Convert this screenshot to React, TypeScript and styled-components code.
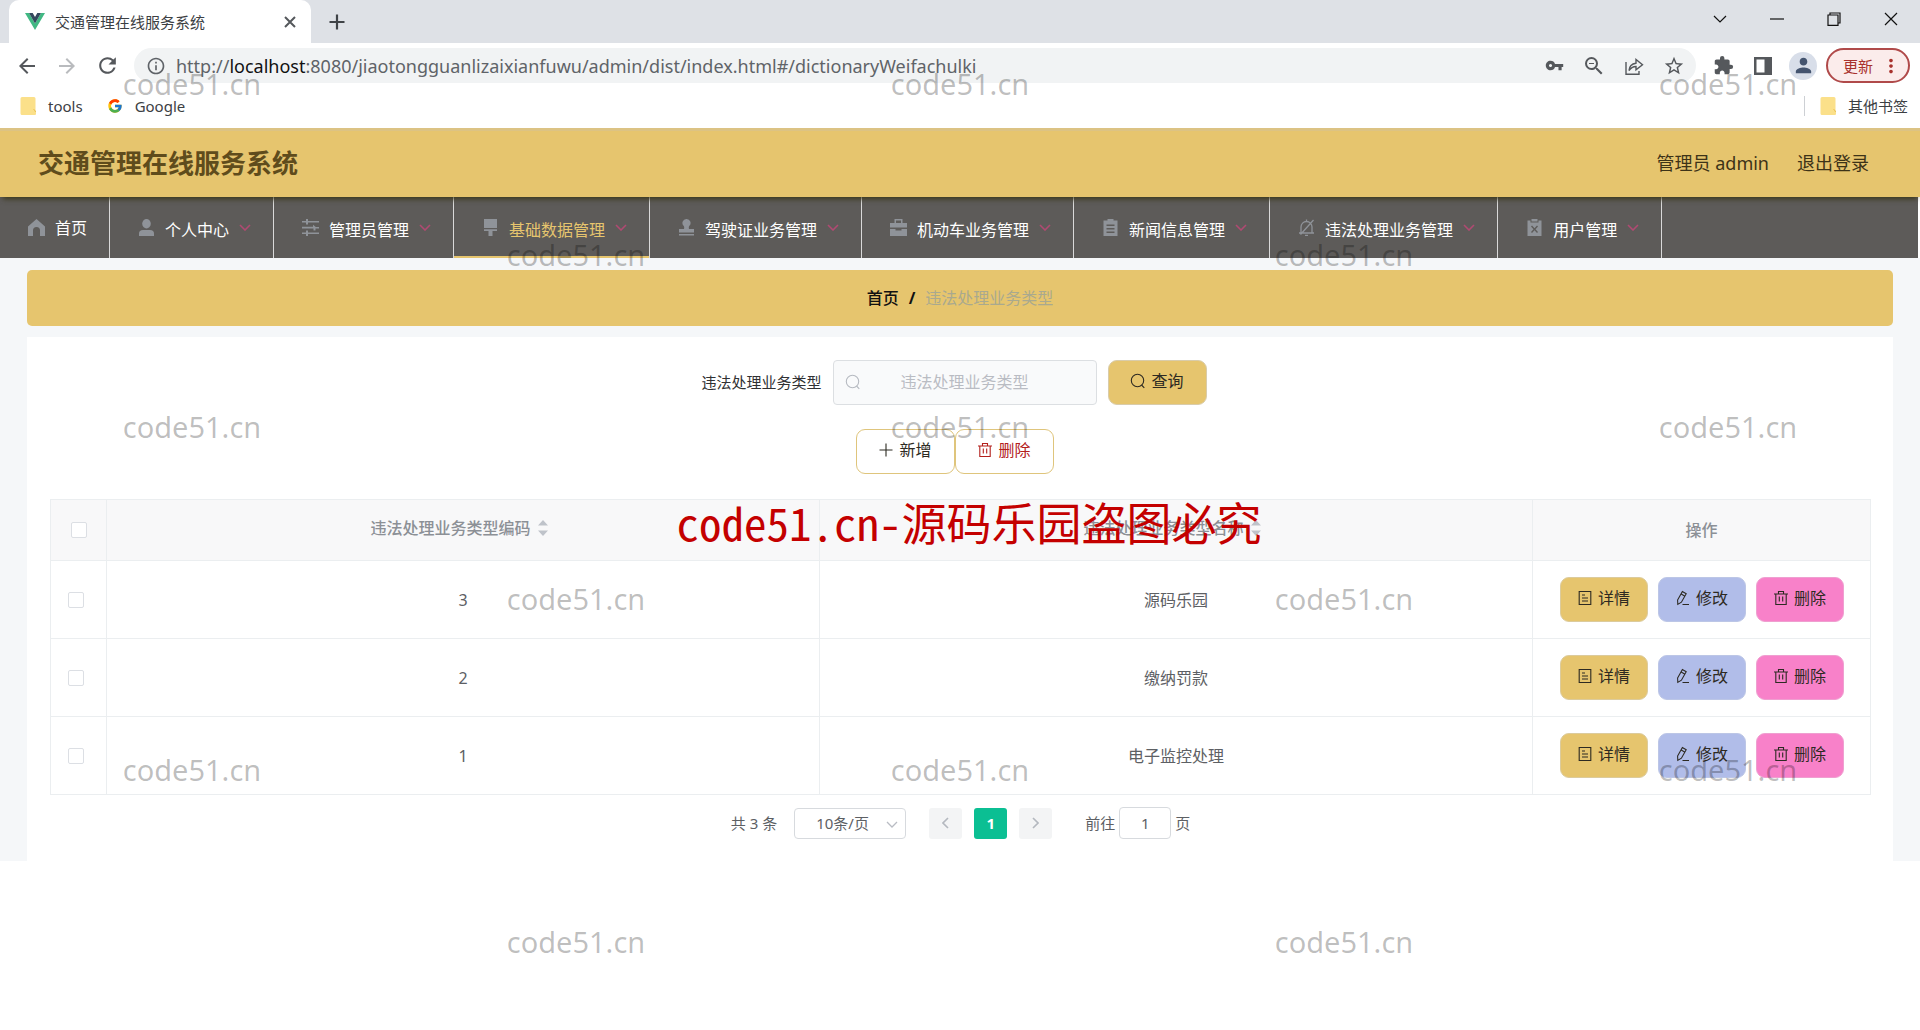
import React from "react";
import styled, { createGlobalStyle } from "styled-components";
import {
  MdVpnKey,
  MdZoomOut,
  MdStarBorder,
  MdExtension,
  MdPerson,
  MdRefresh,
  MdArrowBack,
  MdArrowForward,
  MdInfoOutline,
  MdMoreVert,
} from "react-icons/md";
import { FcGoogle } from "react-icons/fc";

const gold = "#e6c56e";
const line = "#ebeef0";

const GlobalStyle = createGlobalStyle`
  *, *::before, *::after { box-sizing: border-box; }
  body {
    margin: 0;
    background: #fff;
    color: #303133;
    font-family: "Noto Sans", "Noto Sans CJK SC", sans-serif;
    font-size: 16px;
    line-height: 24px;
  }
  button, input, select { font: inherit; color: inherit; margin: 0; }
  button { cursor: pointer; }
  a { color: inherit; text-decoration: none; }
  svg { display: block; flex: none; }
`;

const Screen = styled.div`
  position: relative;
  min-height: 100vh;
  overflow: hidden;
`;

/* ---------- browser window ---------- */

const TabStrip = styled.div`
  display: flex;
  height: 43px;
  background: #dee1e6;
`;

const Tab = styled.div`
  display: flex;
  align-items: center;
  width: 302px;
  margin-left: 9px;
  padding: 0 11px 0 16px;
  gap: 10px;
  border-radius: 10px 10px 0 0;
  background: #fff;
  font-size: 15px;
  color: #3c4043;
`;

const TabTitle = styled.span`
  flex: 1;
  white-space: nowrap;
`;

const IconButton = styled.button<{ $size?: number }>`
  display: flex;
  align-items: center;
  justify-content: center;
  width: ${(p) => p.$size ?? 20}px;
  height: ${(p) => p.$size ?? 20}px;
  padding: 0;
  border: 0;
  background: none;
  color: #55585c;
`;

const NewTab = styled(IconButton)`
  align-self: center;
  margin-left: 14px;
`;

const WindowControls = styled.div`
  display: flex;
  align-items: center;
  gap: 37px;
  height: 37px;
  margin-left: auto;
  padding-right: 19px;
  button { color: #111; }
`;

const Toolbar = styled.div`
  display: flex;
  align-items: center;
  height: 45px;
  padding: 0 10px 0 16px;
`;

const NavButtons = styled.div`
  display: flex;
  gap: 18px;
  margin-right: 16px;
  button { width: 22px; }
`;

const AddressBar = styled.div`
  display: flex;
  flex: 1;
  align-items: center;
  height: 35px;
  padding: 0 12px 0 12px;
  gap: 10px;
  border-radius: 18px;
  background: #f1f3f4;
  color: #5f6368;
`;

const Url = styled.div`
  flex: 1;
  font-size: 18px;
  white-space: nowrap;
  b { font-weight: 400; color: #111; }
`;

const AddressActions = styled.div`
  display: flex;
  gap: 20px;
`;

const ToolbarActions = styled.div`
  display: flex;
  align-items: center;
  gap: 20px;
  padding: 0 9px 0 17px;
`;

const Avatar = styled.button`
  display: flex;
  align-items: center;
  justify-content: center;
  width: 28px;
  height: 28px;
  margin-left: -4px;
  padding: 0;
  border: 0;
  border-radius: 50%;
  background: #d8dee9;
  color: #44546f;
`;

const UpdateButton = styled.button`
  display: flex;
  align-items: center;
  justify-content: space-between;
  width: 84px;
  height: 35px;
  padding: 0 6px 0 15px;
  border: 2px solid #b04a4a;
  border-radius: 18px;
  background: #fbeceb;
  color: #a8322d;
  font-size: 15px;
`;

const Bookmarks = styled.div`
  display: flex;
  align-items: center;
  height: 40px;
  padding: 0 12px 4px 20px;
  gap: 24px;
  font-size: 15px;
  color: #3c4043;
`;

const Bookmark = styled.a`
  display: flex;
  align-items: center;
  gap: 12px;
`;

const OtherBookmarks = styled.div`
  display: flex;
  margin-left: auto;
  padding-left: 15px;
  border-left: 1px solid #cdd0d4;
  line-height: 20px;
`;

/* ---------- site header ---------- */

const Header = styled.header`
  position: relative;
  display: flex;
  align-items: center;
  justify-content: space-between;
  height: 69px;
  padding: 0 51px 2px 38px;
  border-top: 3px solid #dcc384;
  background: ${gold};
  box-shadow: 0 5px 5px -3px rgba(50, 46, 10, 0.8);
`;

const SiteTitle = styled.h1`
  margin: 0;
  font-size: 26px;
  line-height: 36px;
  font-weight: 700;
  color: #5f4c1c;
`;

const UserArea = styled.div`
  display: flex;
  gap: 28px;
  font-size: 18px;
  color: #3d3318;
`;

const Nav = styled.nav`
  display: flex;
  height: 61px;
  margin-right: 2px;
  background: #5d5b59;
`;

const NavItem = styled.a<{ $active?: boolean }>`
  display: flex;
  align-items: center;
  gap: 10px;
  padding: 0 22px 0 28px;
  border-right: 1px solid #d9d9d9;
  box-shadow: ${(p) => (p.$active ? `inset 0 -2px 0 ${gold}` : "none")};
  color: ${(p) => (p.$active ? gold : "#fff")};
  white-space: nowrap;
`;

const SubmenuLabel = styled.span`
  padding-top: 4px;
`;

/* ---------- page body ---------- */

const Page = styled.main`
  padding: 12px 27px 0;
  background: #f5f7f9;
`;

const Breadcrumb = styled.div`
  display: flex;
  align-items: center;
  justify-content: center;
  gap: 10px;
  height: 56px;
  border-radius: 5px;
  background: ${gold};
  color: #111;
  font-weight: 500;
`;

const Slash = styled.span`
  font-weight: 700;
`;

const CrumbCurrent = styled.span`
  font-weight: 400;
  color: #a9a98f;
`;

const Card = styled.section`
  margin-top: 11px;
  padding: 23px 22px 22px 23px;
  background: #fff;
`;

const SearchRow = styled.form`
  display: flex;
  align-items: center;
  justify-content: center;
  gap: 11px;
  padding-right: 13px;
`;

const SearchLabel = styled.label`
  padding-bottom: 2px;
  font-size: 15px;
`;

const SearchField = styled.div`
  display: flex;
  align-items: center;
  width: 264px;
  height: 45px;
  padding: 0 15px 2px 11px;
  border: 1px solid #dcdfe2;
  border-radius: 4px;
  background: #f9fafb;
  color: #b6bac1;
`;

const SearchInput = styled.input`
  flex: 1;
  min-width: 0;
  padding: 0 12px 0 0;
  border: 0;
  outline: 0;
  background: none;
  text-align: center;
  &::placeholder { color: #b9bcc3; opacity: 1; }
`;

const Button = styled.button<{ $fill?: string; $border?: string; $ink?: string; $small?: boolean }>`
  display: flex;
  align-items: center;
  justify-content: center;
  gap: 5px;
  width: ${(p) => (p.$small ? 88 : 99)}px;
  height: 45px;
  padding: 0 0 3px;
  border: 1px solid ${(p) => p.$border ?? "#d9ccaa"};
  border-radius: 9px;
  background: ${(p) => p.$fill ?? "#fff"};
  color: ${(p) => p.$ink ?? "#2d2a22"};
`;

const ButtonRow = styled.div`
  display: flex;
  justify-content: center;
  margin: 24px 0 25px;
  padding-right: 12px;
`;

const Table = styled.table`
  width: 100%;
  table-layout: fixed;
  border-collapse: separate;
  border-spacing: 0;
  border-top: 1px solid ${line};
  border-left: 1px solid ${line};
  color: #5d6064;
  text-align: center;
`;

const HeadCell = styled.th<{ $width?: number }>`
  width: ${(p) => (p.$width ? `${p.$width}px` : "auto")};
  height: 61px;
  padding: 0;
  border-right: 1px solid ${line};
  border-bottom: 1px solid ${line};
  background: #f8f8f9;
  color: #8c9096;
  font-weight: 500;
`;

const Cell = styled.td`
  height: 78px;
  padding: 0;
  border-right: 1px solid ${line};
  border-bottom: 1px solid ${line};
`;

const SortHead = styled.span`
  display: flex;
  align-items: center;
  justify-content: center;
  gap: 7px;
  padding: 0 8px 4px 0;
`;

const CheckBox = styled.input.attrs({ type: "checkbox" })`
  display: block;
  appearance: none;
  width: 16px;
  height: 16px;
  margin: 0 auto;
  border: 1px solid #dcdfe4;
  border-radius: 2px;
  background: #fff;
`;

const CheckCell = styled(Cell)`
  padding-right: 5px;
`;

const Actions = styled.div`
  display: flex;
  justify-content: center;
  gap: 10px;
`;

const Pagination = styled.div`
  display: flex;
  align-items: center;
  justify-content: center;
  height: 32px;
  margin-top: 12px;
  font-size: 15px;
  color: #5d6064;
`;

const SizeSelect = styled.div`
  position: relative;
  margin: 0 23px 0 17px;
  select {
    display: block;
    appearance: none;
    width: 112px;
    height: 31px;
    padding: 0 0 0 21px;
    border: 1px solid #d7dade;
    border-radius: 4px;
    background: #fff;
  }
  svg {
    position: absolute;
    top: 13px;
    right: 8px;
    color: #b9bcc3;
    pointer-events: none;
  }
`;

const PageButton = styled.button<{ $active?: boolean }>`
  display: flex;
  align-items: center;
  justify-content: center;
  width: 33px;
  height: 31px;
  margin-right: 12px;
  padding: 0;
  border: 0;
  border-radius: 3px;
  background: ${(p) => (p.$active ? "#0bbf93" : "#f3f4f5")};
  color: ${(p) => (p.$active ? "#fff" : "#b4b8bf")};
  font-weight: 700;
`;

const JumpLabel = styled.label`
  display: flex;
  align-items: center;
  gap: 4px;
  margin-left: 21px;
`;

const JumpInput = styled.input`
  width: 52px;
  height: 32px;
  padding: 0;
  border: 1px solid #d7dade;
  border-radius: 4px;
  background: #fff;
  text-align: center;
`;

/* ---------- watermark overlay ---------- */

const MarkLayer = styled.div`
  position: absolute;
  inset: 0;
  pointer-events: none;
`;

const Mark = styled.span<{ $left: number; $top: number }>`
  position: absolute;
  left: ${(p) => p.$left}%;
  top: ${(p) => p.$top}px;
  transform: translate(-50%, -50%);
  font-size: 29px;
  line-height: 40px;
  color: rgba(0, 0, 0, 0.26);
`;

const RedMark = styled.div`
  position: absolute;
  top: 489px;
  left: 0;
  right: 0;
  padding-left: 18px;
  text-align: center;
  font-family: "Noto Sans CJK SC", sans-serif;
  font-size: 45px;
  line-height: 66px;
  font-feature-settings: "hwid";
  color: #c40000;
`;

/* ---------- icons ---------- */

type IconProps = { size?: number };

const Chevron = ({ color = "currentColor", d = "M1 1l5 5 5-5", w = 12, h = 7, sw = 1.3 }) => (
  <svg width={w} height={h} viewBox={`0 0 ${w} ${h}`} fill="none" stroke={color} strokeWidth={sw}>
    <path d={d} />
  </svg>
);

const Outline = ({ size = 16, children }: IconProps & { children: React.ReactNode }) => (
  <svg width={size} height={size} viewBox="0 0 16 16" fill="none" stroke="currentColor" strokeWidth="1.1">
    {children}
  </svg>
);

const SearchIcon = () => (
  <Outline>
    <circle cx="7.5" cy="7.5" r="6.2" />
    <path d="M11.5 12l2.8 2.8" />
  </Outline>
);
const PlusIcon = () => (
  <Outline>
    <path d="M8 1.5v13M1.5 8h13" />
  </Outline>
);
const TrashIcon = () => (
  <Outline>
    <path d="M1 4h14M5.5 4V1.5h5V4M2.8 4v10.5h10.4V4M6.3 6.5v5M9.7 6.5v5" />
  </Outline>
);
const DocIcon = () => (
  <Outline>
    <path d="M2.2 1.5h11.6v13H2.2zM5 5h3M5 8h6M5 11h6" />
  </Outline>
);
const EditIcon = () => (
  <Outline>
    <path d="M2.600 10L7.400 1.600l3.800 2.200-4.800 8.400-3.600 2.200zM6.200 4l3.800 2.200M7.500 14.500h6.500" />
  </Outline>
);

const VueLogo = () => (
  <svg width="20" height="17" viewBox="0 0 20 17">
    <path d="M0 0h4l6 10.400L16 0h4L10 17z" fill="#41b883" />
    <path d="M4 0h3.700L10 4 12.300 0H16l-6 10.400z" fill="#34495e" />
  </svg>
);

const FolderIcon = () => (
  <svg width="16" height="18" viewBox="0 0 16 18">
    <path d="M2 0h12q1.500 0 1.500 1.500V14q.5 0 .5 1v2q0 1-1 1H2q-1.500 0-1.500-1.500v-15Q.5 0 2 0z" fill="#fbe08a" />
    <path d="M13.500 12.500q2 .5 2 2.500" stroke="#e8bf4d" fill="none" />
  </svg>
);

const ShareIcon = () => (
  <svg width="20" height="20" viewBox="0 0 20 20" fill="none" stroke="currentColor" strokeWidth="1.400">
    <path d="M2 6v12.300h13V15" />
    <path d="M5 14.500q.5-6.500 7-7.300V3.500l6.500 5.200-6.500 5.200v-3.400q-4.500.2-7 4z" />
  </svg>
);

const PanelIcon = () => (
  <svg width="18" height="18" viewBox="0 0 18 18">
    <path d="M0 0h18v18H0zM2.500 2.500v13h8v-13z" fill="currentColor" fillRule="evenodd" />
  </svg>
);

const Thin = ({ d, sw = 1.2 }: { d: string; sw?: number }) => (
  <svg width="14" height="14" viewBox="0 0 14 14" fill="none" stroke="currentColor" strokeWidth={sw}>
    <path d={d} />
  </svg>
);

const NewTabIcon = () => (
  <svg width="16" height="16" viewBox="0 0 16 16" stroke="#3f4347" strokeWidth="2.200">
    <path d="M8 0.500v15M0.500 8h15" />
  </svg>
);

const navShapes: Record<string, React.ReactNode> = {
  home: <path d="M8.500 0L17 7.500V17h-5v-5.500a3.500 3.500 0 0 0-7 0V17H0V7.500z" />,
  user: (
    <>
      <ellipse cx="8.500" cy="4.700" rx="4.300" ry="4.700" />
      <path d="M1 17v-2.500Q1 11 5 11h7q4 0 4 3.500V17z" />
    </>
  ),
  operation: (
    <path d="M0 2h4V0h2v2h11v1.500H6V5.500H4V3.500H0zM0 7.800h11V5.800l2.500 2v.1H17v1.500h-3.500v2h-2v-2H0zM0 13.500h4v-2h2v2h11V15H6v2H4v-2H0z" />
  ),
  brush: <path d="M2 0h13v9H2zM2 10.200h13V12H10.500v5h-4v-5H2z" />,
  stamp: (
    <path d="M8.500 0a4 4 0 0 1 2.700 7Q10.500 8 11 10h5v3.500H1V10h5q.5-2-.2-3A4 4 0 0 1 8.500 0zM1 15h15v1.500H1z" />
  ),
  bag: (
    <path d="M4.500 4V0h8v4H17v4.500H0V4zM6 4h5V1.500H6zM0 10h5.500v1.500h6V10H17v7H0z" fillRule="evenodd" />
  ),
  clipboard: (
    <path
      d="M1.500 1.500h4V0h6v1.500h4V17h-14zM4.500 5.500V7h8V5.500zM4.500 9v1.500h8V9zM4.500 12.500V14h8v-1.500z"
      fillRule="evenodd"
    />
  ),
  mute: (
    <path
      d="M1 14h15M3 14V8a5.500 5.500 0 0 1 11 0v6M8.500 2.500V.5M7 16.500h3M2.500 15.500L15.500 1"
      fill="none"
      stroke="#8f9399"
      strokeWidth="1.300"
    />
  ),
  cross: (
    <path
      d="M1.500 1.500h3v2h8v-2h3V17h-14zM5.500 0h6v2.500h-6zM5 7.500l2.500 2.800L5 13l1 1 2.500-2.700L11 14l1-1-2.500-2.700L12 7.500l-1-1-2.500 2.700L6 6.500z"
      fillRule="evenodd"
    />
  ),
};

const NavIcon = ({ name }: { name: string }) => (
  <svg width="17" height="17" viewBox="0 0 17 17" fill="#8f9399">
    {navShapes[name]}
  </svg>
);

const SortIcon = () => (
  <svg width="10" height="16" viewBox="0 0 10 16" fill="#bfc3ca">
    <path d="M5 0l5 5.500H0zM5 16l5-5.500H0z" />
  </svg>
);

/* ---------- data ---------- */

const menu = [
  { icon: "user", text: "个人中心" },
  { icon: "operation", text: "管理员管理" },
  { icon: "brush", text: "基础数据管理", active: true },
  { icon: "stamp", text: "驾驶证业务管理" },
  { icon: "bag", text: "机动车业务管理" },
  { icon: "clipboard", text: "新闻信息管理" },
  { icon: "mute", text: "违法处理业务管理" },
  { icon: "cross", text: "用户管理" },
];

const rows = [
  { code: 3, name: "源码乐园" },
  { code: 2, name: "缴纳罚款" },
  { code: 1, name: "电子监控处理" },
];

const marks = [84, 255, 427, 599, 770, 942].flatMap((top, i) =>
  (i % 2 === 0 ? [10, 50, 90] : [30, 70]).map((left) => ({ top, left })),
);

const Browser = () => (
  <div>
    <TabStrip>
      <Tab>
        <VueLogo />
        <TabTitle>交通管理在线服务系统</TabTitle>
        <IconButton aria-label="关闭标签页">
          <Thin d="M2 2l10 10M12 2L2 12" sw={2} />
        </IconButton>
      </Tab>
      <NewTab aria-label="新标签页" $size={24}>
        <NewTabIcon />
      </NewTab>
      <WindowControls>
        <IconButton aria-label="搜索标签页">
          <Thin d="M1 4l6 6 6-6" />
        </IconButton>
        <IconButton aria-label="最小化">
          <Thin d="M0 7h14" />
        </IconButton>
        <IconButton aria-label="还原">
          <Thin d="M1 3h10v10.400H1zM3 3V1h10v10h-2" />
        </IconButton>
        <IconButton aria-label="关闭">
          <Thin d="M1 1l12 12M13 1L1 13" />
        </IconButton>
      </WindowControls>
    </TabStrip>
    <Toolbar>
      <NavButtons>
        <IconButton aria-label="后退">
          <MdArrowBack size={24} />
        </IconButton>
        <IconButton aria-label="前进">
          <MdArrowForward size={24} color="#b9bbbe" />
        </IconButton>
        <IconButton aria-label="刷新">
          <MdRefresh size={25} />
        </IconButton>
      </NavButtons>
      <AddressBar>
        <MdInfoOutline size={20} />
        <Url>
          http://<b>localhost</b>:8080/jiaotongguanlizaixianfuwu/admin/dist/index.html#/dictionaryWeifachulki
        </Url>
        <AddressActions>
          <IconButton aria-label="密码">
            <MdVpnKey size={19} />
          </IconButton>
          <IconButton aria-label="缩放">
            <MdZoomOut size={24} />
          </IconButton>
          <IconButton aria-label="分享">
            <ShareIcon />
          </IconButton>
          <IconButton aria-label="收藏">
            <MdStarBorder size={22} />
          </IconButton>
        </AddressActions>
      </AddressBar>
      <ToolbarActions>
        <IconButton aria-label="扩展程序">
          <MdExtension size={21} />
        </IconButton>
        <IconButton aria-label="侧边栏">
          <PanelIcon />
        </IconButton>
        <Avatar aria-label="用户">
          <MdPerson size={23} />
        </Avatar>
      </ToolbarActions>
      <UpdateButton>
        更新
        <MdMoreVert size={22} />
      </UpdateButton>
    </Toolbar>
    <Bookmarks>
      <Bookmark href="#tools">
        <FolderIcon />
        tools
      </Bookmark>
      <Bookmark href="#google">
        <FcGoogle size={16} />
        Google
      </Bookmark>
      <OtherBookmarks>
        <Bookmark href="#other">
          <FolderIcon />
          其他书签
        </Bookmark>
      </OtherBookmarks>
    </Bookmarks>
  </div>
);

const DataTable = () => (
  <Table>
    <thead>
      <tr>
        <HeadCell $width={56}>
          <CheckBox aria-label="全选" />
        </HeadCell>
        <HeadCell>
          <SortHead>
            违法处理业务类型编码
            <SortIcon />
          </SortHead>
        </HeadCell>
        <HeadCell>
          <SortHead>
            违法处理业务类型名称
            <SortIcon />
          </SortHead>
        </HeadCell>
        <HeadCell $width={338}>操作</HeadCell>
      </tr>
    </thead>
    <tbody>
      {rows.map((row) => (
        <tr key={row.code}>
          <CheckCell>
            <CheckBox aria-label={`选择 ${row.name}`} />
          </CheckCell>
          <Cell>{row.code}</Cell>
          <Cell>{row.name}</Cell>
          <Cell>
            <Actions>
              <Button $small $fill={gold} $border="#dccb9c">
                <DocIcon />
                详情
              </Button>
              <Button $small $fill="#b1bde9" $border="#bcc6e6">
                <EditIcon />
                修改
              </Button>
              <Button $small $fill="#f881c9" $border="#ef9fd0">
                <TrashIcon />
                删除
              </Button>
            </Actions>
          </Cell>
        </tr>
      ))}
    </tbody>
  </Table>
);

export default function App() {
  return (
    <Screen>
      <GlobalStyle />
      <Browser />
      <Header>
        <SiteTitle>交通管理在线服务系统</SiteTitle>
        <UserArea>
          <span>管理员 admin</span>
          <a href="#logout">退出登录</a>
        </UserArea>
      </Header>
      <Nav>
        <NavItem href="#home">
          <NavIcon name="home" />
          首页
        </NavItem>
        {menu.map((item) => (
          <NavItem key={item.text} href={`#${item.icon}`} $active={item.active}>
            <NavIcon name={item.icon} />
            <SubmenuLabel>{item.text}</SubmenuLabel>
            <Chevron color="#b04a72" sw={1.6} />
          </NavItem>
        ))}
      </Nav>
      <Page>
        <Breadcrumb>
          <a href="#home">首页</a>
          <Slash>/</Slash>
          <CrumbCurrent>违法处理业务类型</CrumbCurrent>
        </Breadcrumb>
        <Card>
          <SearchRow onSubmit={(e) => e.preventDefault()}>
            <SearchLabel htmlFor="type-name">违法处理业务类型</SearchLabel>
            <SearchField>
              <SearchIcon />
              <SearchInput id="type-name" placeholder="违法处理业务类型" />
            </SearchField>
            <Button type="submit" $fill={gold}>
              <SearchIcon />
              查询
            </Button>
          </SearchRow>
          <ButtonRow>
            <Button $border="#dfc57c">
              <PlusIcon />
              新增
            </Button>
            <Button $border="#dfc57c" $ink="#b3201c">
              <TrashIcon />
              删除
            </Button>
          </ButtonRow>
          <DataTable />
          <Pagination>
            <span>共 3 条</span>
            <SizeSelect>
              <select aria-label="每页条数" defaultValue="10">
                <option value="10">10条/页</option>
                <option value="20">20条/页</option>
              </select>
              <Chevron />
            </SizeSelect>
            <PageButton aria-label="上一页">
              <Chevron d="M6 1L1 6l5 5" w={7} h={12} sw={1.6} />
            </PageButton>
            <PageButton $active>1</PageButton>
            <PageButton aria-label="下一页">
              <Chevron d="M1 1l5 5-5 5" w={7} h={12} sw={1.6} />
            </PageButton>
            <JumpLabel>
              前往
              <JumpInput defaultValue="1" />
              页
            </JumpLabel>
          </Pagination>
        </Card>
      </Page>
      <MarkLayer>
        {marks.map((m) => (
          <Mark key={`${m.left}-${m.top}`} $left={m.left} $top={m.top}>
            code51.cn
          </Mark>
        ))}
        <RedMark>code51.cn-源码乐园盗图必究</RedMark>
      </MarkLayer>
    </Screen>
  );
}
